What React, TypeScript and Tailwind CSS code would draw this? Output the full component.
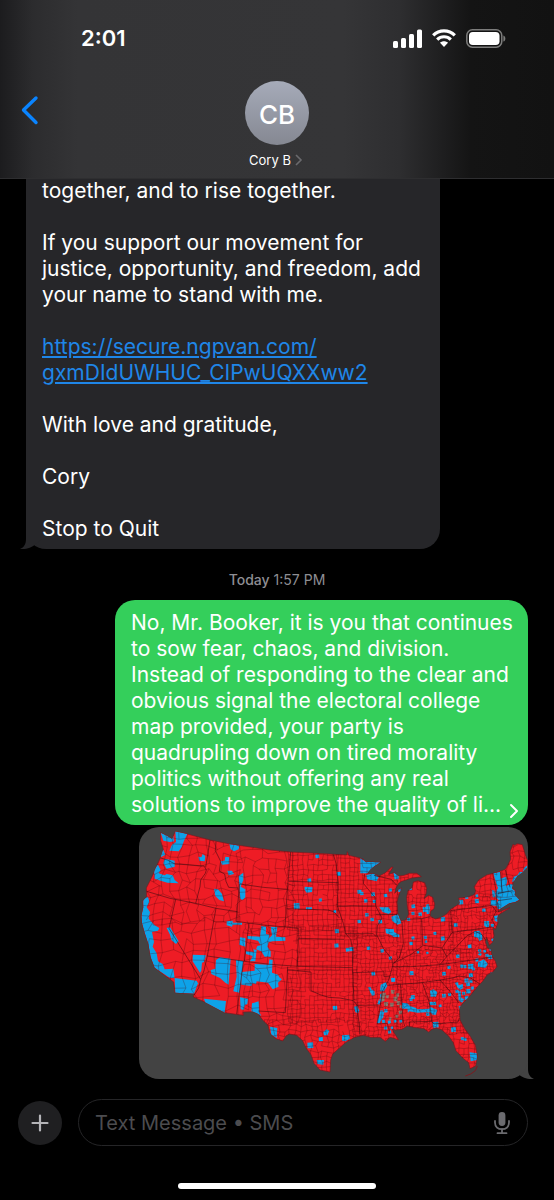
import { ChevronRight } from "lucide-react";

type Point = [number, number];

const LAND =
  "M92 38L108 46L126 56L130 48L136 34L172 42L240 60L300 72L355 80L420 90L482 96L560 100L650 105L652 95L656 106L690 114L700 118L706 125L752 127L734 138L722 147L712 160L732 162L748 168L766 158L784 142L789 141L781 154L776 163L792 158L806 168L822 166L838 160L860 160L874 170L862 172L845 174L828 180L815 184L806 190L798 204L794 220L804 210L815 204L806 226L801 246L803 280L812 302L828 300L836 282L832 258L830 232L834 212L846 204L850 186L864 182L884 188L890 205L888 222L882 236L896 226L908 232L914 252L912 266L902 274L900 288L916 297L934 292L950 282L962 268L990 250L986 234L1012 232L1032 224L1037 214L1033 200L1046 180L1070 165L1090 160L1104 156L1126 148L1134 134L1142 118L1140 96L1149 73L1154 76L1162 71L1177 74L1186 104L1193 122L1192 142L1176 158L1162 168L1150 186L1146 204L1156 212L1154 224L1168 240L1156 246L1138 250L1114 264L1105 276L1140 263L1106 284L1102 292L1104 308L1096 328L1088 320L1092 346L1088 366L1078 376L1070 352L1066 366L1072 384L1082 388L1086 408L1096 424L1101 440L1088 456L1072 464L1058 484L1042 500L1026 520L1010 538L998 550L988 564L990 600L1004 626L1020 648L1036 676L1042 708L1037 738L1020 746L1016 728L998 714L978 692L970 668L956 648L936 630L920 624L906 628L896 636L882 626L850 622L832 618L816 628L796 630L786 626L792 638L806 660L792 655L780 652L766 664L750 652L722 652L700 646L674 652L646 668L626 686L608 702L602 720L600 756L570 750L552 730L543 704L528 684L518 662L500 646L478 642L468 648L458 663L436 655L420 640L414 616L398 600L385 582L370 575L340 576L340 586L284 578L224 546L190 531L192 521L135 518L131 486L112 472L74 443L62 412L55 372L44 338L36 310L34 288L40 262L38 244L50 230L49 204L66 170L80 138L92 112L100 88L92 62Z";

const STATES = [
  "M92 114L112 120L135 132L168 134L222 138L229 150L226 160L212 180L210 200L197 250",
  "M240 60L227 142M50 214L120 235L197 250L258 265L322 275",
  "M258 65L256 92L272 124L268 154L284 162L288 184L296 202L324 204",
  "M329 192L400 202L472 208M329 192L318 304M318 304L400 315L465 321L505 325L502 438",
  "M482 96L472 208L465 321M476 184L625 188M470 266L595 270L612 276L628 294",
  "M357 310L343 424M258 265L232 408M137 238L117 325L212 478L206 504L192 526",
  "M232 408L343 424L420 433L505 439L668 443M232 408L222 452L212 478M340 424L320 583",
  "M473 440L466 578L385 573M473 450L543 456L543 512L570 524L596 532L630 534L670 542L682 556",
  "M505 355L642 358M610 103L618 130L624 186L622 258L640 310L648 342L662 358L668 390L668 458L672 540",
  "M622 258L734 258M645 341L730 341L738 350M704 162L700 190L718 212L735 232L737 258L756 294L742 318L740 344L760 385L786 418L788 438L776 480L758 512L750 560L742 612",
  "M738 283L802 283M816 306L820 370L808 414L790 430L842 404L880 376L936 384L966 338L962 272",
  "M732 166L784 178L800 196M875 296L878 376M830 298L875 296L900 290M668 458L762 455L762 470L778 470",
  "M788 440L842 440L932 434L1000 424L1096 410M772 496L876 488L930 480L968 474L986 468L1022 474L1050 492",
  "M962 272L1086 256M966 337L1086 321M1086 256L1098 274L1086 300L1096 318M936 384L950 410L984 376L1010 348L1036 334",
  "M950 410L930 434M1036 334L1056 344L1072 368M812 494L818 598L824 618M877 488L896 540L902 572L905 604",
  "M838 620L838 606L905 604L912 612L984 606L988 594M930 480L960 514L986 548",
  "M680 556L746 555M680 556L686 600L690 642M742 612L772 610L778 634M1088 160L1100 220L1098 274",
  "M1104 220L1148 212M1104 242L1146 236M1126 150L1140 202M1112 156L1116 218M1102 246L1106 276",
];

const BLUE_AREAS = [
  "M92 38L108 46L126 56L130 48L132 64L120 66L100 62Z",
  "M136 34L172 42L162 62L155 82L146 94L118 92L126 74L138 66Z",
  "M90 94L100 90L106 104L92 112ZM104 116L134 122L134 140L110 146L100 130Z",
  "M205 110L214 112L218 102L226 108L224 124L208 122ZM272 124L284 122L286 110L298 112L298 132L276 134Z",
  "M298 72L328 77L326 88L312 94L302 88ZM292 152L306 152L312 162L296 166Z",
  "M72 148L84 134L92 150L86 160L104 166L110 162L128 166L134 180L146 190L112 188L92 182L74 176Z",
  "M326 168L340 158L340 180L332 200L346 208L346 232L338 240L330 236L328 196Z",
  "M252 206L264 208L276 222L282 244L268 240L256 228Z",
  "M40 238L54 230L58 246L50 262L60 276L56 296L74 316L88 324L84 332L66 336L72 366L68 380L80 400L84 424L98 432L104 448L130 446L134 474L120 474L74 443L62 412L55 372L44 338L36 310L34 288L40 262Z",
  "M110 324L120 322L146 364L138 372L124 360L120 344Z",
  "M134 474L200 482L204 490L192 521L136 518Z",
  "M188 404L228 406L222 426L216 428L214 452L210 458L188 424Z",
  "M242 450L256 446L258 420L270 412L302 416L296 494L286 488L270 474L244 462Z",
  "M318 420L340 424L328 518L310 514L320 470Z",
  "M222 536L288 543L284 578L226 548ZM330 532L354 536L352 552L344 556L342 570L332 568Z",
  "M366 550L386 544L388 576L394 588L380 580L364 574ZM420 620L442 624L440 654L424 644Z",
  "M290 304L308 302L308 308L336 308L336 314L308 314L306 320L290 316ZM330 352L346 354L346 380L328 374Z",
  "M352 348L390 350L394 318L408 320L408 342L418 344L418 354L426 346L422 320L442 322L438 350L466 352L466 362L428 364L416 366L412 380L422 394L422 410L404 410L394 394L378 388L382 378L392 376L384 362L352 356Z",
  "M348 394L372 396L370 388L380 390L376 424L360 424L368 408L348 402Z",
  "M334 456L374 452L374 432L416 434L418 418L428 420L426 458L444 464L448 472L456 478L444 488L446 500L428 508L414 488L380 484L378 492L368 490L364 498L334 494Z",
  "M691 114L706 125L752 127L734 138L712 160L691 160ZM708 166L730 160L746 172L740 184L712 178Z",
  "M790 156L806 168L806 178L794 178ZM748 262L776 262L784 276L776 282L758 276Z",
  "M784 290L800 284L804 282L812 300L814 310L802 314L786 302Z",
  "M888 254L896 252L900 264L898 282L890 282Z",
  "M1090 160L1110 156L1112 176L1128 170L1132 182L1128 198L1142 192L1150 194L1146 206L1156 214L1154 224L1170 238L1156 246L1138 250L1114 266L1104 268L1098 252L1106 240L1098 232L1096 220L1104 204L1098 188Z",
  "M1150 172L1164 164L1168 156L1178 156L1182 144L1192 136L1192 146L1176 160L1162 170L1154 184L1146 186Z",
  "M1086 210L1094 212L1096 232L1088 232ZM1082 240L1100 240L1100 258L1082 256Z",
  "M1092 288L1104 286L1102 306L1094 302ZM1032 334L1048 332L1056 344L1058 358L1048 364L1044 354L1032 350Z",
  "M1044 426L1062 418L1074 432L1066 444L1044 440ZM1048 396L1056 402L1052 408L1044 404Z",
  "M974 488L984 486L986 496L998 492L1000 504L990 510L982 502ZM984 512L992 514L994 534L1004 538L996 548L986 542Z",
  "M816 548L832 550L840 558L858 564L862 568L898 566L900 560L922 570L918 584L908 584L900 576L862 578L838 574L834 578L832 566L816 566Z",
  "M900 512L910 508L922 516L918 530L902 530Z",
  "M752 494L768 486L772 498L762 514L750 514ZM746 540L752 546L748 554L742 552Z",
  "M750 576L762 576L760 592L748 610L740 608L746 592Z",
  "M1019 697L1040 700L1042 720L1022 724ZM636 646L658 644L660 656L646 664L636 662Z",
  "M766 326L792 328L792 336L808 344L808 352L790 350L782 344L768 340Z",
  "M524 200L548 202L546 216L530 218L524 210ZM528 262L546 262L546 268L528 268Z",
  "M590 628L598 632L592 646L582 646L580 636ZM560 720L582 720L580 734L562 732Z",
  "M672 560L682 558L688 572L684 580L676 576ZM714 502L722 500L724 508L734 514L732 526L722 520Z",
];

// x, y, size
const BLUE_COUNTIES = [
  [556, 104, 11], [532, 176, 11], [566, 236, 9], [491, 250, 17], [610, 271, 8],
  [614, 328, 12], [613, 371, 12], [608, 558, 13], [532, 668, 17], [566, 652, 12],
  [620, 156, 12], [682, 210, 12], [690, 216, 10], [702, 238, 10], [723, 218, 11],
  [761, 222, 10], [776, 206, 9], [804, 206, 10], [836, 202, 9], [844, 254, 11],
  [844, 276, 9], [865, 278, 10], [878, 262, 14], [728, 240, 9], [682, 300, 10],
  [705, 280, 10], [721, 294, 10], [745, 300, 11], [647, 384, 11], [658, 382, 12],
  [710, 380, 10], [751, 388, 10], [776, 410, 9], [831, 294, 9], [844, 350, 9],
  [838, 366, 10], [881, 348, 9], [910, 336, 9], [932, 350, 12], [932, 292, 13],
  [971, 310, 11], [985, 240, 14], [1005, 228, 9], [1034, 238, 12], [1036, 224, 8],
  [1056, 266, 10], [1062, 304, 15], [1066, 312, 10], [1082, 312, 9], [1013, 374, 11],
  [978, 404, 10], [952, 438, 9], [936, 456, 11], [990, 434, 10], [1000, 436, 9],
  [1014, 432, 16], [1026, 444, 8], [1016, 460, 12], [1078, 384, 9], [1066, 402, 9],
  [1074, 406, 12], [1080, 458, 8], [1003, 476, 12], [1008, 488, 11], [1008, 508, 13],
  [1004, 528, 11], [996, 516, 9], [976, 510, 9], [954, 520, 9], [936, 522, 11],
  [842, 526, 12], [838, 534, 9], [838, 454, 12], [783, 474, 12], [724, 456, 11],
  [908, 606, 17], [963, 622, 14], [992, 652, 9], [1000, 654, 9], [750, 572, 9],
  [762, 568, 10], [756, 600, 9], [762, 620, 9], [774, 632, 9], [782, 620, 7],
  [773, 602, 9], [791, 600, 8], [808, 600, 8], [724, 518, 9], [898, 546, 10],
  [908, 546, 10], [888, 578, 10], [986, 558, 10], [926, 554, 8], [888, 396, 7],
  [860, 394, 7], [884, 362, 7], [1036, 416, 9], [1044, 388, 9], [1060, 390, 8],
  [1084, 356, 8], [1018, 480, 9], [1022, 500, 9], [750, 522, 11], [748, 536, 9],
] as const;

const MUTED_COUNTIES = [
  [754, 518, 14], [752, 530, 13], [762, 546, 13], [780, 548, 12], [790, 530, 14],
  [783, 510, 11], [800, 544, 11], [806, 572, 11], [796, 584, 10], [776, 592, 9],
  [798, 520, 10], [768, 526, 9], [808, 556, 8],
] as const;

function noise(a: number, b: number) {
  const n = Math.sin(a * 127.1 + b * 311.7) * 43758.5453;
  return n - Math.floor(n) - 0.5;
}

// county lines: a mesh of cells with shaken corners
function mesh(x0: number, y0: number, x1: number, y1: number, cell: number, shake: number) {
  const cols = Math.ceil((x1 - x0) / cell);
  const rows = Math.ceil((y1 - y0) / cell);
  const at = (i: number, j: number): Point => [
    Math.round(x0 + i * cell + noise(i + x0, j + y0) * shake),
    Math.round(y0 + j * cell + noise(j + y0 + 9, i + x0 + 5) * shake),
  ];
  let d = "";
  for (let i = 0; i <= cols; i++) {
    for (let j = 0; j <= rows; j++) {
      const [x, y] = at(i, j);
      const [rx, ry] = at(i + 1, j);
      const [bx, by] = at(i, j + 1);
      if (i < cols && noise(i * 3 + x0, j * 7) < 0.36) d += `M${x} ${y}L${rx} ${ry}`;
      if (j < rows && noise(i * 5, j * 3 + y0) < 0.36) d += `M${x} ${y}L${bx} ${by}`;
    }
  }
  return d;
}

const COUNTY_LINES = [
  mesh(28, 30, 322, 300, 25, 20),
  mesh(28, 300, 340, 590, 33, 24),
  mesh(322, 70, 474, 320, 24, 16),
  mesh(340, 320, 500, 590, 24, 14),
  mesh(474, 90, 620, 320, 15, 5),
  mesh(500, 320, 670, 450, 13, 2),
  mesh(474, 450, 680, 600, 13, 4),
  mesh(400, 600, 690, 760, 16, 10),
  mesh(620, 90, 800, 345, 13, 4),
  mesh(670, 345, 800, 670, 12, 6),
  mesh(800, 150, 960, 390, 12, 4),
  mesh(800, 390, 1110, 640, 10, 7),
  mesh(960, 220, 1110, 390, 11, 7),
  mesh(940, 640, 1050, 760, 15, 9),
  mesh(1030, 60, 1200, 220, 17, 10),
].join("");

function ElectionMap() {
  return (
    <svg viewBox="27 21 1167 756" className="block w-full" role="img" aria-label="County map">
      <defs>
        <clipPath id="land">
          <path d={LAND} />
        </clipPath>
      </defs>
      <path d={LAND} fill="#ee1c25" stroke="#7c1a20" strokeWidth="2" />
      <g clipPath="url(#land)">
        {BLUE_AREAS.map((d) => (
          <path key={d} d={d} fill="#0ea2e8" />
        ))}
        {BLUE_COUNTIES.map(([x, y, s]) => (
          <path key={`${x}-${y}`} d={`M${x} ${y}l${s} -1l1 ${s}l-${s} 1z`} fill="#0ea2e8" />
        ))}
        {MUTED_COUNTIES.map(([x, y, s]) => (
          <path key={`${x}-${y}`} d={`M${x} ${y}h${s}l-2 ${s}h-${s - 3}z`} fill="#8a7a70" />
        ))}
        <path d={COUNTY_LINES} fill="none" stroke="#4a0a10" strokeOpacity="0.65" strokeWidth="1.3" />
        {STATES.map((d) => (
          <path key={d} d={d} fill="none" stroke="#2a0a0e" strokeOpacity="0.85" strokeWidth="1.8" strokeLinejoin="round" />
        ))}
      </g>
      <path d="M1006 768L1022 762L1036 752L1042 738" fill="none" stroke="#7c1a20" strokeWidth="3" />
    </svg>
  );
}

function StatusIcons() {
  return (
    <div className="flex items-center gap-2.5 text-white">
      <svg width="29" height="19" viewBox="0 0 29 19" fill="currentColor">
        <rect x="0" y="12" width="5" height="7" rx="1.5" />
        <rect x="8" y="9" width="5" height="10" rx="1.5" />
        <rect x="16" y="5" width="5" height="14" rx="1.5" />
        <rect x="24" y="0.5" width="5" height="18.5" rx="1.5" />
      </svg>
      <svg width="24" height="18" viewBox="0 0 24 18" fill="none" stroke="currentColor" strokeWidth="3.2">
        <path d="M1.2 6.4C7.2 0.3 16.8 0.3 22.8 6.4" />
        <path d="M5.2 10.6C9 6.8 15 6.8 18.8 10.6" />
        <path d="M12 18L8 13.8C10.2 11.8 13.8 11.8 16 13.8Z" fill="currentColor" stroke="none" />
      </svg>
      <svg width="40" height="19" viewBox="0 0 40 19" fill="none">
        <rect x="0.8" y="0.8" width="35" height="17.4" rx="5.6" stroke="#7d7d7c" strokeWidth="1.5" />
        <rect x="3" y="3" width="30.5" height="13" rx="3.8" fill="#fff" />
        <path d="M37.4 6.4C40 7.4 40 11.6 37.4 12.6Z" fill="#7d7d7c" />
      </svg>
    </div>
  );
}

function Header() {
  return (
    <header className="shrink-0 h-[178px] bg-[linear-gradient(90deg,#1c1c1e_0%,#2c2c2e_6%,#343436_14%,#353537_62%,#2e2e30_72%,#1e1e1f_80%,#141414_85%,#121212_100%)]">
      <div className="flex items-center justify-between h-19 pl-[81px] pr-12">
        <span className="text-[22px] font-semibold">2:01</span>
        <StatusIcons />
      </div>
      <div className="grid grid-cols-3 items-start px-3 pt-[5px]">
        <button aria-label="Back" className="justify-self-start py-2.5 text-[#0a84ff]">
          <svg width="36" height="38" viewBox="0 0 36 38" fill="none">
            <path d="M24 7L11.5 19L24 31.5" stroke="currentColor" strokeWidth="3.4" strokeLinecap="round" strokeLinejoin="round" />
          </svg>
        </button>
        <button className="justify-self-center flex flex-col items-center gap-1.5">
          <span className="flex items-center justify-center size-16 rounded-full bg-linear-to-b from-[#a6abb9] to-[#858892] pt-0.5 text-[26px] font-medium">
            CB
          </span>
          <span className="flex items-center text-[13px] leading-[18px]">
            Cory B
            <svg width="14" height="14" viewBox="0 0 14 14" fill="none" stroke="#6a6a6e" strokeWidth="1.6">
              <path d="M5 2L10 7L5 12" />
            </svg>
          </span>
        </button>
      </div>
    </header>
  );
}

function Tail({ side, color }: { side: "left" | "right"; color: string }) {
  return (
    <svg
      width="28"
      height="22"
      viewBox="0 0 28 22"
      className={side === "left" ? "absolute -left-1.5 bottom-0" : "absolute -right-1.5 bottom-0 -scale-x-100"}
    >
      <path d="M6 0V12C6 17 4 20.5 0 21.8C6 22.6 12 20.5 15 17.4L22 12V0Z" fill={color} />
    </svg>
  );
}

function Composer() {
  return (
    <footer className="shrink-0 flex flex-col pt-5 pb-[11px]">
      <form className="flex items-center gap-4 pl-[18px] pr-[26px]">
        <button type="button" aria-label="Add" className="flex items-center justify-center size-11 shrink-0 rounded-full bg-[#1f1f21]">
          <svg width="18" height="18" viewBox="0 0 18 18" stroke="#b4b4b8" strokeWidth="2.2" strokeLinecap="round">
            <path d="M9 1.5V16.5M1.5 9H16.5" />
          </svg>
        </button>
        <div className="flex flex-1 items-center h-[47px] rounded-full border border-[#252527] px-4">
          <input
            aria-label="Text message"
            placeholder="Text Message • SMS"
            className="flex-1 min-w-0 bg-transparent text-[20px] outline-none placeholder:text-[#4c4c4f]"
          />
          <button type="button" aria-label="Dictate" className="text-[#6b6b6f]">
            <svg width="18" height="24" viewBox="0 0 18 24" fill="none" stroke="currentColor" strokeWidth="1.8" strokeLinecap="round">
              <rect x="5.6" y="1" width="6.8" height="14" rx="3.4" fill="currentColor" stroke="none" />
              <path d="M2 10V11.5C2 15.8 5 18.2 9 18.2C13 18.2 16 15.8 16 11.5V10" />
              <path d="M9 18.2V22M4.5 22.2H13.5" />
            </svg>
          </button>
        </div>
      </form>
      <div className="self-center mt-[37px] w-[198px] h-1.5 rounded-full bg-white" />
    </footer>
  );
}

export default function App() {
  return (
    <div className="flex flex-col h-screen bg-black text-white font-['Inter',sans-serif]">
      <Header />

      <main className="flex flex-1 min-h-0 flex-col justify-end overflow-hidden border-t border-[#2e2e30] px-[26px]">
        <div className="relative shrink-0 w-[414px] max-w-full rounded-b-[20px] bg-[#262629] px-4 pb-[7px] text-[21px] leading-[26px]">
          <Tail side="left" color="#262629" />
          <div className="relative flex flex-col gap-[26px]">
            <p>together, and to rise together.</p>
            <p>If you support our movement for justice, opportunity, and freedom, add your name to stand with me.</p>
            <a href="#link" className="text-[#1f86e8] underline decoration-2 underline-offset-2">
              https://secure.ngpvan.com/
              <br />
              gxmDIdUWHUC_CIPwUQXXww2
            </a>
            <p>With love and gratitude,</p>
            <p>Cory</p>
            <p>Stop to Quit</p>
          </div>
        </div>

        <p className="mt-[22px] mb-[11px] text-center text-[14px] leading-[18px] text-[#8e8e93]">
          <span className="font-medium">Today</span> 1:57 PM
        </p>

        <div className="relative shrink-0 self-end w-[413px] max-w-full rounded-[20px] bg-[#34cf5b] pl-4 pr-3 pt-2.5 pb-[7px] text-[21px] leading-[26px]">
          <p>
            No, Mr. Booker, it is you that continues to sow fear, chaos, and division. Instead of responding to the
            clear and obvious signal the electoral college map provided, your party is quadrupling down on tired
            morality politics without offering any real solutions to improve the quality of li...
          </p>
          <button aria-label="Show full message" className="absolute right-0.5 bottom-0.5">
            <ChevronRight size={24} strokeWidth={2} />
          </button>
        </div>

        <div className="relative shrink-0 self-end mt-0.5 w-[389px] max-w-full">
          <Tail side="right" color="#434343" />
          <div className="relative overflow-hidden rounded-[20px] bg-[#434343]">
            <ElectionMap />
          </div>
        </div>
      </main>

      <Composer />
    </div>
  );
}
